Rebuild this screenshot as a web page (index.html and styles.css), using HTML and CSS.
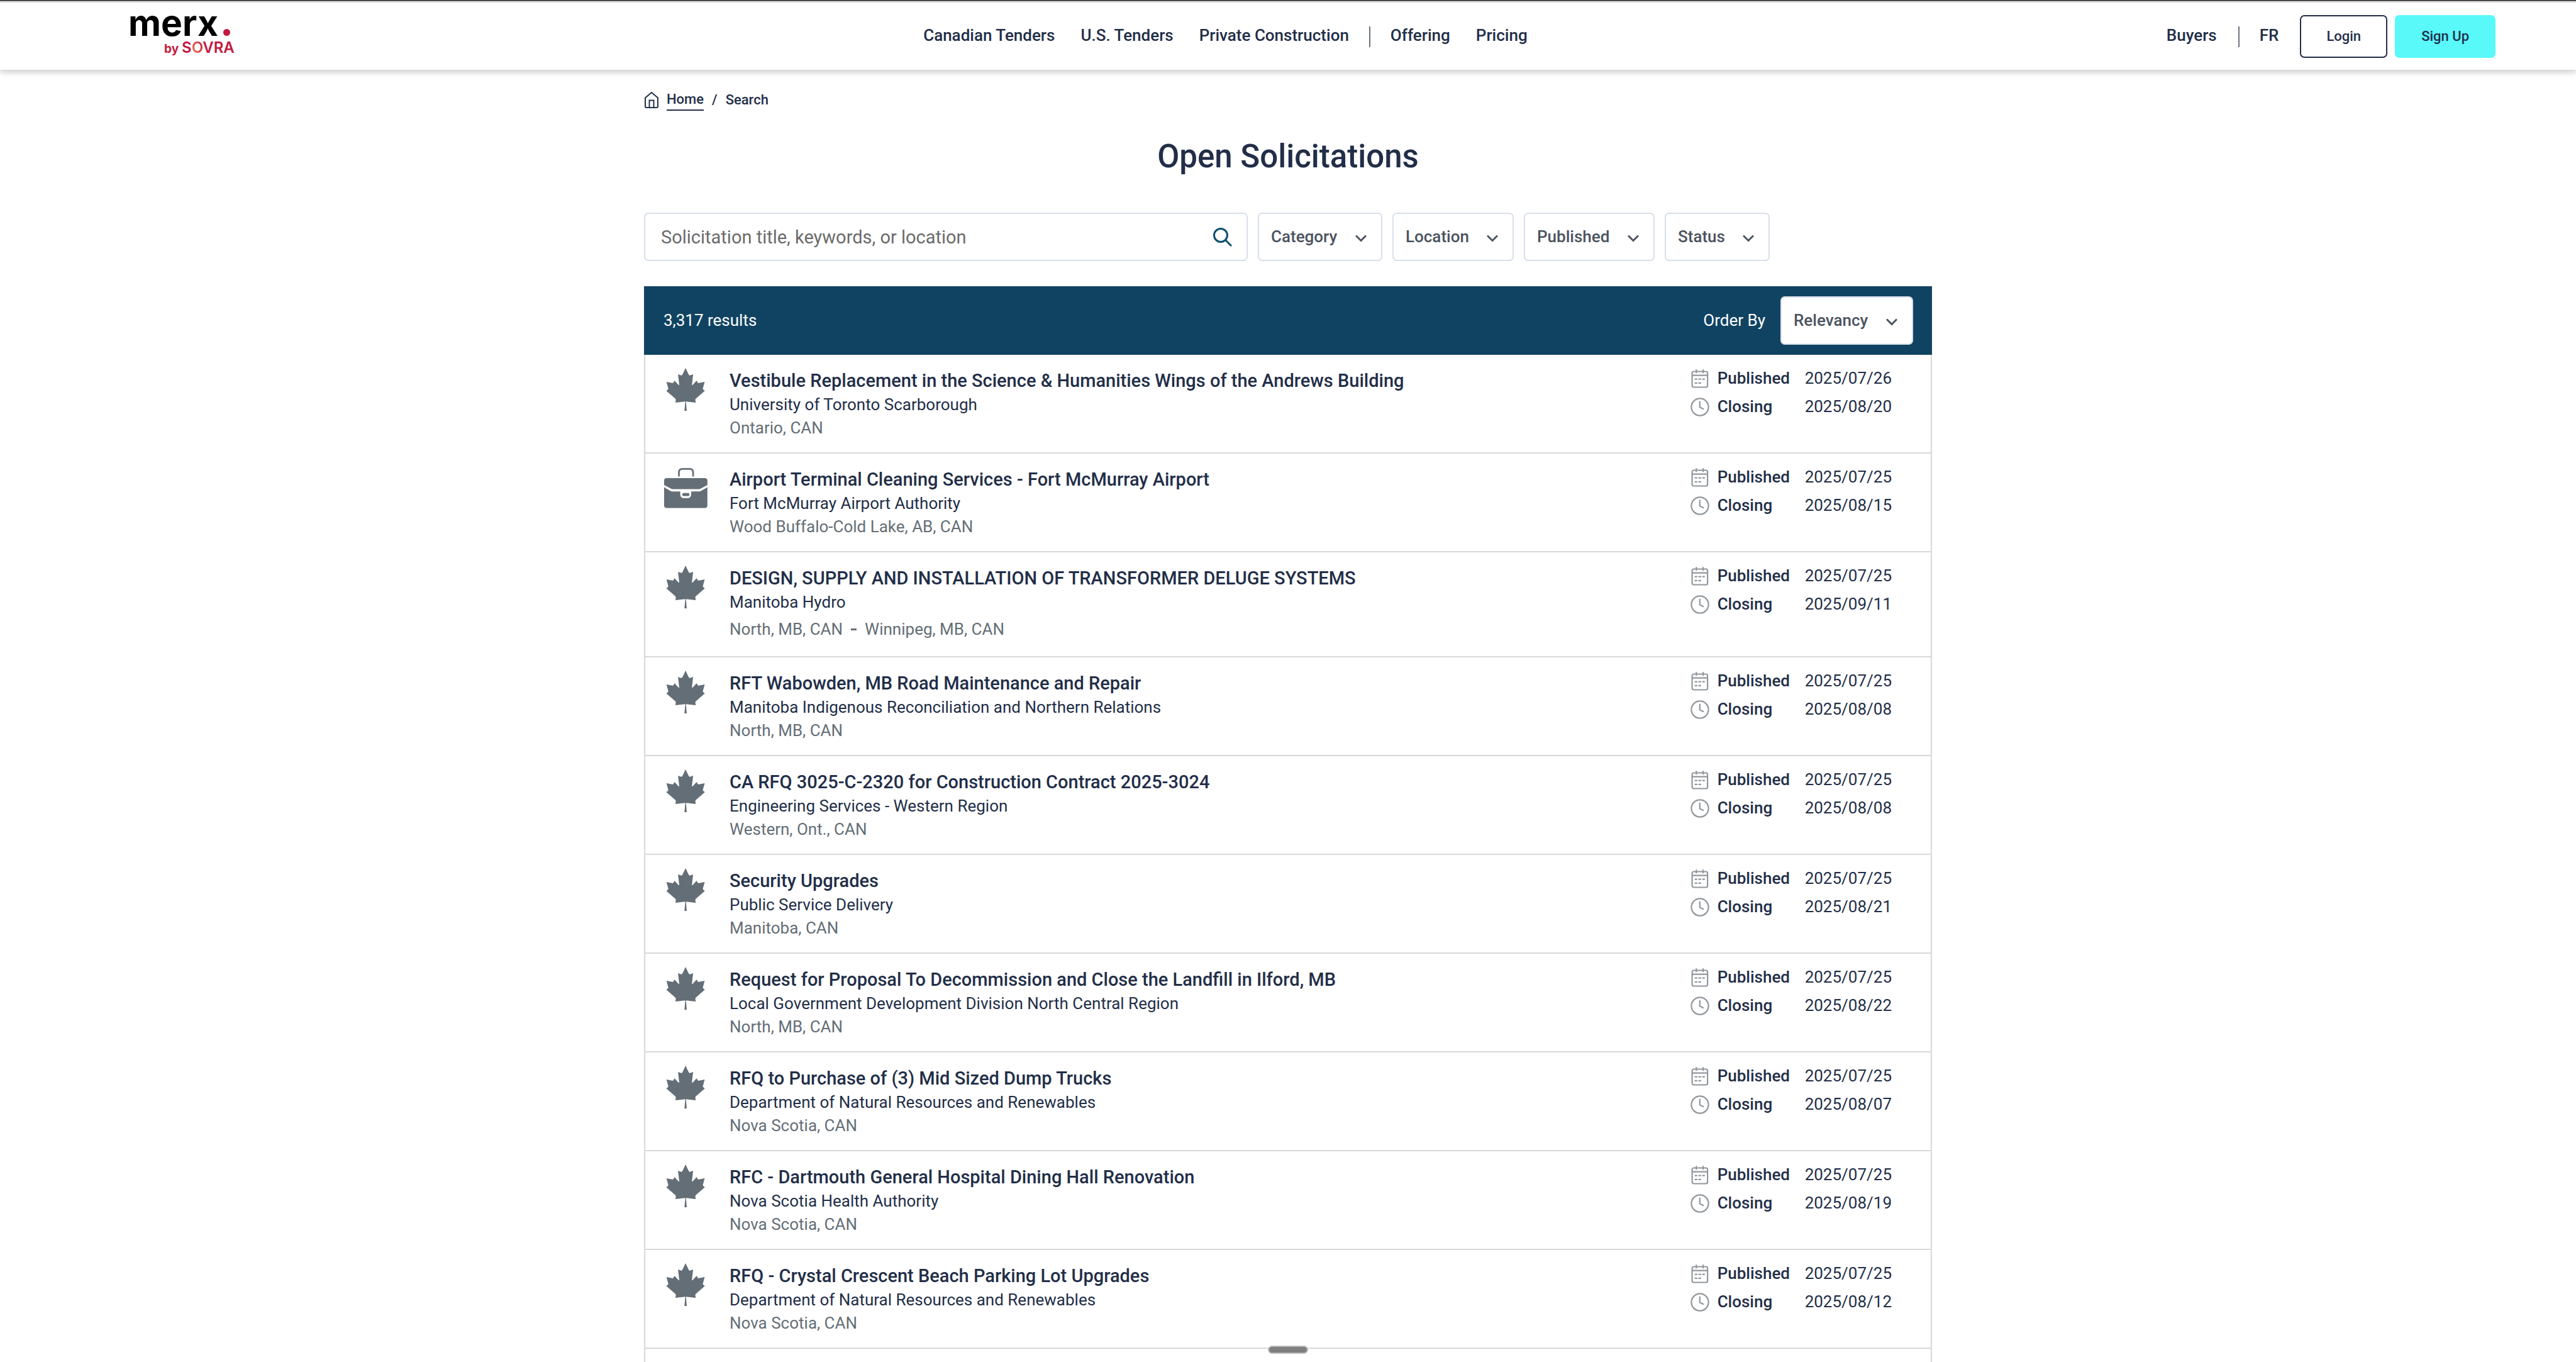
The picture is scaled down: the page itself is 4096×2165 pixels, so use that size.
FILE: index.html
```html
<!DOCTYPE html>
<html lang="en">
<head>
<meta charset="utf-8">
<title>Open Solicitations</title>
<link rel="stylesheet" href="styles.css">
</head>
<body>
<svg class="sprite" aria-hidden="true">
  <symbol id="leaf" viewBox="0 0 70 70"><path d="M34.100 0L30.100 8.500L28.500 11.200Q27.500 12 26.500 11.600L22.100 9.900L24 26.400Q24 27.500 23 26.900L16.500 20L14.700 23.200Q14 24 12.800 23.700L3.700 22.100L6.400 31.700Q6.900 33 6.200 34L3.500 36.300L17.600 48.500Q18.900 49.500 18.600 51L17.900 54.900L33.700 53.300L32.300 68H36L34.700 53.300L50.300 54.900L49.600 51Q49.300 49.500 50.600 48.500L64.700 36.300L62 34Q61.300 33 61.800 31.700L64.500 22.100L55.400 23.700Q54.200 24 53.500 23.200L51.700 20L45.200 26.900Q44.200 27.500 44.200 26.400L46.100 9.900L41.700 11.600Q40.700 12 39.700 11.200L38.100 8.500Z"/></symbol>
  <symbol id="case" viewBox="0 0 70 70"><path d="M23.500 14.300V9q0-5.600 5.600-5.600h11.400q5.600 0 5.600 5.600v5.300" fill="none" stroke="currentColor" stroke-width="2.700" stroke-linecap="round"/><path d="M4 18h60.800q4 0 4 4v7L56.500 35.600H12.500L0 29v-7q0-4 4-4z"/><path d="M0 32.400l11.500 6.900h14.100v4.500q0 6 6 6h5.400q6 0 6-6v-4.500h14l11.800-6.900v29.100q0 4-4 4H4q-4 0-4-4z"/><rect x="28.800" y="41.800" width="11.500" height="4.800" rx="2.400"/></symbol>
  <symbol id="calendar" viewBox="0 0 30 30" fill="none" stroke="currentColor" stroke-width="2.200"><rect x="2.600" y="3.500" width="24.500" height="25" rx="2.500"/><path d="M2.600 9.700h24.500M9.300 .3v6M20 .3v6"/><path d="M7.500 15.700h2.500M13.500 15.700h2.500M19.500 15.700h2.500M7.500 21.900h2.500M13.500 21.900h2.500" stroke-linecap="round"/></symbol>
  <symbol id="clock" viewBox="0 0 30 30" fill="none" stroke="currentColor" stroke-width="2.200"><circle cx="15" cy="15" r="13.600"/><path d="M14.800 6.600v8.800l5.400 2.600" stroke-linecap="round"/></symbol>
  <symbol id="chevron" viewBox="0 0 18 12" fill="none" stroke="currentColor" stroke-width="3"><path d="M1 1.500l8 8 8-8"/></symbol>
</svg>

<header class="header">
  <a class="brand" href="#" aria-label="merx by Sovra">
    <span class="brand-name">merx<i class="brand-dot"></i></span>
    <span class="brand-by">by <b class="sovra">S<span class="sovra-o">O</span>VRA</b></span>
  </a>
  <nav class="nav">
    <a href="#">Canadian Tenders</a>
    <a href="#">U.S. Tenders</a>
    <a href="#">Private Construction</a>
    <span class="divider"></span>
    <a href="#">Offering</a>
    <a href="#">Pricing</a>
  </nav>
  <div class="actions">
    <a href="#">Buyers</a>
    <span class="divider"></span>
    <a class="lang" href="#">FR</a>
    <button class="btn btn-outline" type="button">Login</button>
    <button class="btn btn-primary" type="button">Sign Up</button>
  </div>
</header>

<main class="page">
  <nav class="crumbs" aria-label="Breadcrumb">
    <svg class="home-icon" viewBox="0 0 24 28" fill="none" stroke="currentColor" stroke-width="2"><path d="M2 10.500L12 2l10 8.500V24q0 2-2 2H4q-2 0-2-2z"/><path d="M8.500 26V14.500h7V26"/></svg>
    <a class="crumb-link" href="#">Home</a>
    <span>/</span>
    <span>Search</span>
  </nav>
  <h1 class="title">Open Solicitations</h1>

  <form class="filters">
    <div class="search">
      <input class="search-input" type="text" placeholder="Solicitation title, keywords, or location" aria-label="Solicitation title, keywords, or location">
      <button class="search-btn" type="button" aria-label="Search"><svg class="search-icon" viewBox="0 0 30 30" fill="none" stroke="currentColor" stroke-width="3"><circle cx="12" cy="12" r="10.500"/><path d="M19.500 19.500L29 29"/></svg></button>
    </div>
    <label class="select"><select aria-label="Category"><option>Category</option></select><svg class="chevron"><use href="#chevron"/></svg></label>
    <label class="select"><select aria-label="Location"><option>Location</option></select><svg class="chevron"><use href="#chevron"/></svg></label>
    <label class="select"><select aria-label="Published"><option>Published</option></select><svg class="chevron"><use href="#chevron"/></svg></label>
    <label class="select"><select aria-label="Status"><option>Status</option></select><svg class="chevron"><use href="#chevron"/></svg></label>
  </form>

  <section class="results">
    <div class="bar">
      <span class="count">3,317 results</span>
      <label for="order">Order By</label>
      <div class="select"><select id="order"><option>Relevancy</option></select><svg class="chevron"><use href="#chevron"/></svg></div>
    </div>
    <ul class="list">
      <li class="row">
        <svg class="type"><use href="#leaf"/></svg>
        <div class="info"><a class="name" href="#">Vestibule Replacement in the Science &amp; Humanities Wings of the Andrews Building</a><p class="org">University of Toronto Scarborough</p><p class="place">Ontario, CAN</p></div>
        <dl class="dates"><dt><svg class="ico"><use href="#calendar"/></svg>Published</dt><dd>2025/07/26</dd><dt><svg class="ico"><use href="#clock"/></svg>Closing</dt><dd>2025/08/20</dd></dl>
      </li>
      <li class="row">
        <svg class="type"><use href="#case"/></svg>
        <div class="info"><a class="name" href="#">Airport Terminal Cleaning Services - Fort McMurray Airport</a><p class="org">Fort McMurray Airport Authority</p><p class="place">Wood Buffalo-Cold Lake, AB, CAN</p></div>
        <dl class="dates"><dt><svg class="ico"><use href="#calendar"/></svg>Published</dt><dd>2025/07/25</dd><dt><svg class="ico"><use href="#clock"/></svg>Closing</dt><dd>2025/08/15</dd></dl>
      </li>
      <li class="row">
        <svg class="type"><use href="#leaf"/></svg>
        <div class="info"><a class="name" href="#">DESIGN, SUPPLY AND INSTALLATION OF TRANSFORMER DELUGE SYSTEMS</a><p class="org">Manitoba Hydro</p><p class="place place-range"><span>North, MB, CAN</span><i class="dash"></i><span>Winnipeg, MB, CAN</span></p></div>
        <dl class="dates"><dt><svg class="ico"><use href="#calendar"/></svg>Published</dt><dd>2025/07/25</dd><dt><svg class="ico"><use href="#clock"/></svg>Closing</dt><dd>2025/09/11</dd></dl>
      </li>
      <li class="row">
        <svg class="type"><use href="#leaf"/></svg>
        <div class="info"><a class="name" href="#">RFT Wabowden, MB Road Maintenance and Repair</a><p class="org">Manitoba Indigenous Reconciliation and Northern Relations</p><p class="place">North, MB, CAN</p></div>
        <dl class="dates"><dt><svg class="ico"><use href="#calendar"/></svg>Published</dt><dd>2025/07/25</dd><dt><svg class="ico"><use href="#clock"/></svg>Closing</dt><dd>2025/08/08</dd></dl>
      </li>
      <li class="row">
        <svg class="type"><use href="#leaf"/></svg>
        <div class="info"><a class="name" href="#">CA RFQ 3025-C-2320 for Construction Contract 2025-3024</a><p class="org">Engineering Services - Western Region</p><p class="place">Western, Ont., CAN</p></div>
        <dl class="dates"><dt><svg class="ico"><use href="#calendar"/></svg>Published</dt><dd>2025/07/25</dd><dt><svg class="ico"><use href="#clock"/></svg>Closing</dt><dd>2025/08/08</dd></dl>
      </li>
      <li class="row">
        <svg class="type"><use href="#leaf"/></svg>
        <div class="info"><a class="name" href="#">Security Upgrades</a><p class="org">Public Service Delivery</p><p class="place">Manitoba, CAN</p></div>
        <dl class="dates"><dt><svg class="ico"><use href="#calendar"/></svg>Published</dt><dd>2025/07/25</dd><dt><svg class="ico"><use href="#clock"/></svg>Closing</dt><dd>2025/08/21</dd></dl>
      </li>
      <li class="row">
        <svg class="type"><use href="#leaf"/></svg>
        <div class="info"><a class="name" href="#">Request for Proposal To Decommission and Close the Landfill in Ilford, MB</a><p class="org">Local Government Development Division North Central Region</p><p class="place">North, MB, CAN</p></div>
        <dl class="dates"><dt><svg class="ico"><use href="#calendar"/></svg>Published</dt><dd>2025/07/25</dd><dt><svg class="ico"><use href="#clock"/></svg>Closing</dt><dd>2025/08/22</dd></dl>
      </li>
      <li class="row">
        <svg class="type"><use href="#leaf"/></svg>
        <div class="info"><a class="name" href="#">RFQ to Purchase of (3) Mid Sized Dump Trucks</a><p class="org">Department of Natural Resources and Renewables</p><p class="place">Nova Scotia, CAN</p></div>
        <dl class="dates"><dt><svg class="ico"><use href="#calendar"/></svg>Published</dt><dd>2025/07/25</dd><dt><svg class="ico"><use href="#clock"/></svg>Closing</dt><dd>2025/08/07</dd></dl>
      </li>
      <li class="row">
        <svg class="type"><use href="#leaf"/></svg>
        <div class="info"><a class="name" href="#">RFC - Dartmouth General Hospital Dining Hall Renovation</a><p class="org">Nova Scotia Health Authority</p><p class="place">Nova Scotia, CAN</p></div>
        <dl class="dates"><dt><svg class="ico"><use href="#calendar"/></svg>Published</dt><dd>2025/07/25</dd><dt><svg class="ico"><use href="#clock"/></svg>Closing</dt><dd>2025/08/19</dd></dl>
      </li>
      <li class="row">
        <svg class="type"><use href="#leaf"/></svg>
        <div class="info"><a class="name" href="#">RFQ - Crystal Crescent Beach Parking Lot Upgrades</a><p class="org">Department of Natural Resources and Renewables</p><p class="place">Nova Scotia, CAN</p></div>
        <dl class="dates"><dt><svg class="ico"><use href="#calendar"/></svg>Published</dt><dd>2025/07/25</dd><dt><svg class="ico"><use href="#clock"/></svg>Closing</dt><dd>2025/08/12</dd></dl>
      </li>
    </ul>
  </section>
</main>
<div class="grip"></div>
</body>
</html>
```
FILE: styles.css
```css
* { box-sizing: border-box; }

body {
  margin: 0;
  min-height: 100vh;
  display: flex;
  flex-direction: column;
  background: #fff;
  color: #222e48;
  font: 400 26px/37px Roboto, sans-serif;
}

a { color: inherit; text-decoration: none; }
p, ul, dl, dd, h1 { margin: 0; padding: 0; }
.sprite { display: none; }

/* Header */
.header {
  border-top: 2px solid #4a4a4a;
  box-shadow: inset 0 3px #ebebeb, 0 3px 10px rgba(0, 0, 0, .24);
  height: 111px;
  padding: 3px 128px 0 204px;
  display: flex;
  align-items: center;
  justify-content: space-between;
  font-weight: 500;
}

.brand {
  width: 248px;
  padding-bottom: 8px;
  font-family: Inter, sans-serif;
  font-weight: 700;
  color: #000;
}
.brand-name {
  display: flex;
  align-items: baseline;
  font-size: 57px;
  line-height: 46px;
}
.brand-dot {
  width: 11px;
  height: 11px;
  margin-left: 8px;
  border-radius: 50%;
  background: #c4183f;
}
.brand-by {
  display: flex;
  align-items: baseline;
  gap: 5px;
  padding-left: 57px;
  color: #c4183f;
  font-size: 19px;
  line-height: 32px;
}
.sovra { font-size: 24px; font-weight: 600; }
.sovra-o {
  background: linear-gradient(60deg, #f58050, #c4183f);
  background-clip: text;
  color: transparent;
}

.nav, .actions { display: flex; align-items: center; }
.nav a, .actions a { padding-bottom: 4px; }
.nav { gap: 41px; }
.divider { width: 2px; height: 33px; background: #6a737c; }
.nav .divider { margin: 0 -9px; }
.actions .divider { margin: 0 32px 0 34px; }
.lang { margin-right: 34px; }

.btn {
  height: 68px;
  padding: 0 40px;
  border: 2px solid #222e48;
  border-radius: 7px;
  background: #fff;
  color: #222e48;
  font: 500 22px/32px Roboto, sans-serif;
}
.btn-primary {
  margin-left: 12px;
  border-color: #59f8f9;
  background: #59f8f9;
}

/* Page column */
.page {
  width: 50%;
  margin: 0 auto;
  flex: 1;
  display: flex;
  flex-direction: column;
}

.crumbs {
  display: flex;
  align-items: center;
  gap: 13px;
  margin-top: 31px;
  font-size: 22px;
  line-height: 32px;
  font-weight: 500;
}
.home-icon { width: 24px; height: 28px; margin-right: -1px; }
.crumb-link { border-bottom: 2px solid #222e48; }
.crumbs, .crumb-link { height: 34px; }

.title {
  margin-top: 43px;
  text-align: center;
  font-size: 51px;
  line-height: 60px;
  font-weight: 500;
}

.filters { display: flex; gap: 16px; margin-top: 59px; }
.search {
  width: 960px;
  height: 77px;
  display: flex;
  align-items: center;
  border: 2px solid #d8dfea;
  border-radius: 7px;
}
.search-input {
  flex: 1;
  height: 100%;
  border: 0;
  padding: 0 25px;
  background: none;
  color: #222e48;
  font: 400 29px/40px Roboto, sans-serif;
}
.search-input::placeholder { color: #6b6b6b; }
.search-btn { border: 0; padding: 0 23px; background: none; color: #0d4f6c; }
.search-icon { display: block; width: 30px; height: 30px; }

.select { display: grid; align-items: center; }
.select > * { grid-area: 1 / 1; }
.select select {
  appearance: none;
  height: 77px;
  padding: 0 69px 0 19px;
  border: 2px solid #d8dfea;
  border-radius: 7px;
  background: #fff;
  color: #4b535f;
  font: 500 26px/37px Roboto, sans-serif;
}
.chevron {
  justify-self: end;
  width: 18px;
  height: 12px;
  margin: 4px 25px 0 0;
  color: #4b535f;
  pointer-events: none;
}

/* Results */
.results { margin-top: 40px; flex: 1; display: flex; flex-direction: column; }
.bar {
  height: 109px;
  padding: 0 30px 0 31px;
  display: flex;
  align-items: center;
  gap: 24px;
  background: #104362;
  color: #fff;
}
.count { margin-right: auto; }

.list {
  flex: 1;
  list-style: none;
  border: solid #d8d8d8;
  border-width: 0 2px;
}
.row {
  display: flex;
  padding: 21px 62px 20px 30px;
  border-bottom: 2px solid #d8d8d8;
}
.type { width: 70px; height: 70px; fill: currentColor; color: #646e76; }
.info { flex: 1; margin-left: 34px; }
.name { display: block; font-size: 29px; line-height: 40px; font-weight: 500; }
.place { color: #646e76; }
.place-range { display: flex; align-items: center; gap: 13px; padding: 6px 0 4px; }
.dash { width: 9px; height: 3px; background: currentColor; }

.dates {
  display: grid;
  grid-template-columns: 182px auto;
  grid-auto-rows: 45px;
  align-items: center;
  height: 90px;
  margin: -6px 0 0;
}
.dates dt { display: flex; align-items: center; gap: 13px; font-weight: 500; }
.ico { width: 30px; height: 30px; color: #91979d; }

.grip {
  position: fixed;
  left: 50%;
  bottom: 13px;
  width: 64px;
  height: 13px;
  margin-left: -32px;
  border: 2px solid #bdbdbd;
  border-radius: 7px;
  background: #7f7f7f;
}
```
